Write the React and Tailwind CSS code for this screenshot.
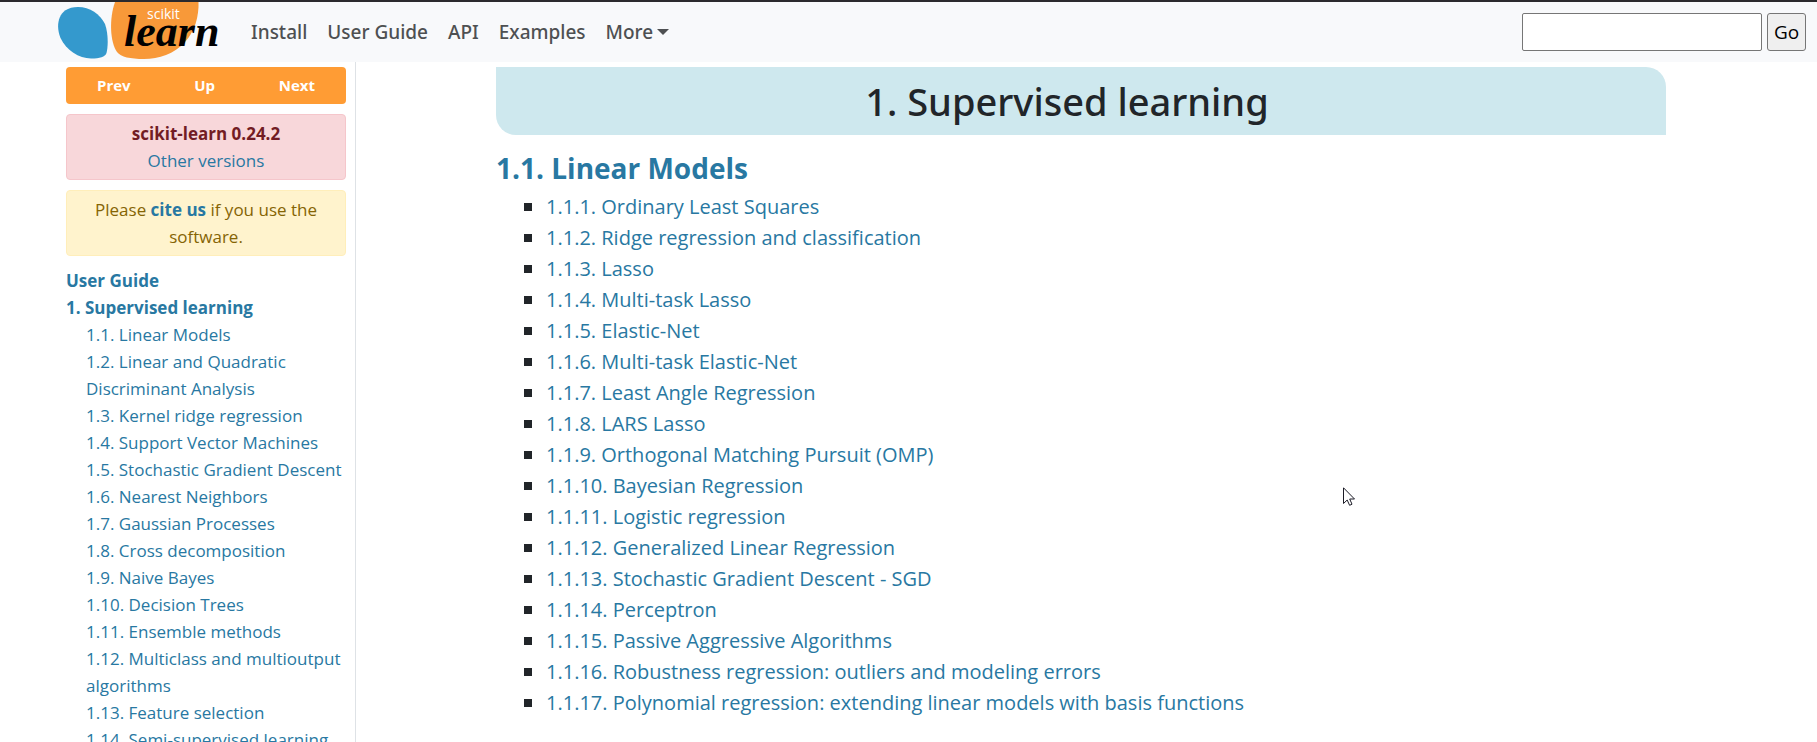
const NAV = ["Install", "User Guide", "API", "Examples"];

const CHAPTERS = [
  "1.1. Linear Models",
  "1.2. Linear and Quadratic Discriminant Analysis",
  "1.3. Kernel ridge regression",
  "1.4. Support Vector Machines",
  "1.5. Stochastic Gradient Descent",
  "1.6. Nearest Neighbors",
  "1.7. Gaussian Processes",
  "1.8. Cross decomposition",
  "1.9. Naive Bayes",
  "1.10. Decision Trees",
  "1.11. Ensemble methods",
  "1.12. Multiclass and multioutput algorithms",
  "1.13. Feature selection",
  "1.14. Semi-supervised learning",
];

const SECTIONS = [
  "1.1.1. Ordinary Least Squares",
  "1.1.2. Ridge regression and classification",
  "1.1.3. Lasso",
  "1.1.4. Multi-task Lasso",
  "1.1.5. Elastic-Net",
  "1.1.6. Multi-task Elastic-Net",
  "1.1.7. Least Angle Regression",
  "1.1.8. LARS Lasso",
  "1.1.9. Orthogonal Matching Pursuit (OMP)",
  "1.1.10. Bayesian Regression",
  "1.1.11. Logistic regression",
  "1.1.12. Generalized Linear Regression",
  "1.1.13. Stochastic Gradient Descent - SGD",
  "1.1.14. Perceptron",
  "1.1.15. Passive Aggressive Algorithms",
  "1.1.16. Robustness regression: outliers and modeling errors",
  "1.1.17. Polynomial regression: extending linear models with basis functions",
];

function Logo() {
  return (
    <svg viewBox="0 0 166 60" className="h-[60px] w-[166px]" role="img" aria-label="scikit-learn">
      <path
        d="M21 5C33 5 43 12 48 22C51 30 51.500 43 49.500 51C48 55 43 56.500 34 56.500C22 56.500 9 48 3.500 36C-1 25 1 14 8 8.500C12 6 16 5 21 5Z"
        fill="#3499cd"
      />
      <path
        d="M58 0H141.500C142 14 138 29 128 40C117 52 102 57 87 57C73 57 64 55 60 50C53 40 52 17 58 0Z"
        fill="#f89939"
      />
      <text x="90" y="17" fontSize="14" fill="#fff" fontFamily="'Open Sans', sans-serif">
        scikit
      </text>
      <text
        x="67"
        y="44"
        fontSize="44"
        fontWeight="700"
        fontStyle="italic"
        fill="#010101"
        fontFamily="'Liberation Serif', serif"
      >
        learn
      </text>
    </svg>
  );
}

function Header() {
  return (
    <header className="flex h-[62px] shrink-0 items-center border-t-2 border-[#2b2a2e] bg-[#f8f9fb] pr-[11px] pl-[57px]">
      <a href="#home">
        <Logo />
      </a>
      <nav className="ml-7 flex items-center gap-5 font-['Noto_Sans',sans-serif] text-[19px] font-medium text-[#4e5052]">
        {NAV.map((item) => (
          <a key={item} href="#nav">
            {item}
          </a>
        ))}
        <button type="button" className="flex items-center gap-1">
          More
          <svg viewBox="0 0 12 6" className="h-[6px] w-3" aria-hidden="true">
            <path d="M0 0H12L6 6Z" fill="#4e5052" />
          </svg>
        </button>
      </nav>
      <form className="ml-auto flex gap-[5px]" onSubmit={(e) => e.preventDefault()}>
        <input
          type="text"
          aria-label="Search"
          className="h-[38px] w-60 rounded-xs border border-[#767676] bg-white px-1 text-lg"
        />
        <button
          type="submit"
          className="h-[38px] w-[39px] rounded-[3px] border border-[#767676] bg-[#efefef] text-[19px] text-black"
        >
          Go
        </button>
      </form>
    </header>
  );
}

function Sidebar() {
  return (
    <aside className="w-[356px] shrink-0 border-r border-[#dee2e6] pt-[5px] pr-[9px] pl-[66px] text-[17px] leading-[27px] text-[#2878a2]">
      <div className="flex h-[37px] items-center justify-between rounded bg-[#ff9c34] px-[31px] text-[15px] font-bold text-white">
        <a href="#prev">Prev</a>
        <a href="#up">Up</a>
        <a href="#next">Next</a>
      </div>
      <div className="mt-[10px] rounded border border-[#f5c6cb] bg-[#f8d7da] py-[5px] text-center">
        <p className="font-bold text-[#721c24]">scikit-learn 0.24.2</p>
        <a href="#versions">Other versions</a>
      </div>
      <p className="mt-[10px] rounded border border-[#ffeeba] bg-[#fff3cd] px-5 py-[5px] text-center text-[#856404]">
        Please{" "}
        <a href="#cite" className="font-bold text-[#2878a2]">
          cite us
        </a>{" "}
        if you use the software.
      </p>
      <nav className="mt-[11px]">
        <a href="#guide" className="block font-bold">
          User Guide
        </a>
        <a href="#supervised" className="block font-bold">
          1. Supervised learning
        </a>
        <ul className="pl-5">
          {CHAPTERS.map((c) => (
            <li key={c}>
              <a href="#chapter">{c}</a>
            </li>
          ))}
        </ul>
      </nav>
    </aside>
  );
}

function Main() {
  return (
    <main className="min-w-0 flex-1 pt-[5px] pr-6 pl-[140px]">
      <div className="max-w-[1170px]">
        <h1 className="rounded-tr-[20px] rounded-bl-[20px] bg-[#cee8ee] pt-[2px] pr-7 pb-[2px] text-center font-['Noto_Sans',sans-serif] text-[38px] leading-[64px] font-medium text-[#212529]">
          1. Supervised learning
        </h1>
        <h2 className="mt-[15px] text-[28px] leading-9 font-bold text-[#2878a2]">
          <a href="#linear">1.1. Linear Models</a>
        </h2>
        <ul className="mt-[5px] pl-7 text-[20px] leading-[31px] text-[#2878a2]">
          {SECTIONS.map((s) => (
            <li key={s} className="flex items-center gap-[14px]">
              <span className="size-2 shrink-0 bg-[#212529]" />
              <a href="#section">{s}</a>
            </li>
          ))}
        </ul>
      </div>
    </main>
  );
}

export default function App() {
  return (
    <div className="relative flex h-screen flex-col overflow-hidden bg-white font-['Open_Sans','Noto_Sans',sans-serif]">
      <Header />
      <div className="flex min-h-0 flex-1">
        <Sidebar />
        <Main />
      </div>
      <svg
        viewBox="0 0 12 19"
        className="pointer-events-none absolute top-[487px] left-[1343px] h-[19px] w-3"
        aria-hidden="true"
      >
        <path
          d="M.5.8V16.500L4.200 13L6.600 18.300L9 17.200L6.700 12H11.500Z"
          fill="#fff"
          stroke="#1b1b26"
          strokeWidth="1"
        />
      </svg>
    </div>
  );
}
